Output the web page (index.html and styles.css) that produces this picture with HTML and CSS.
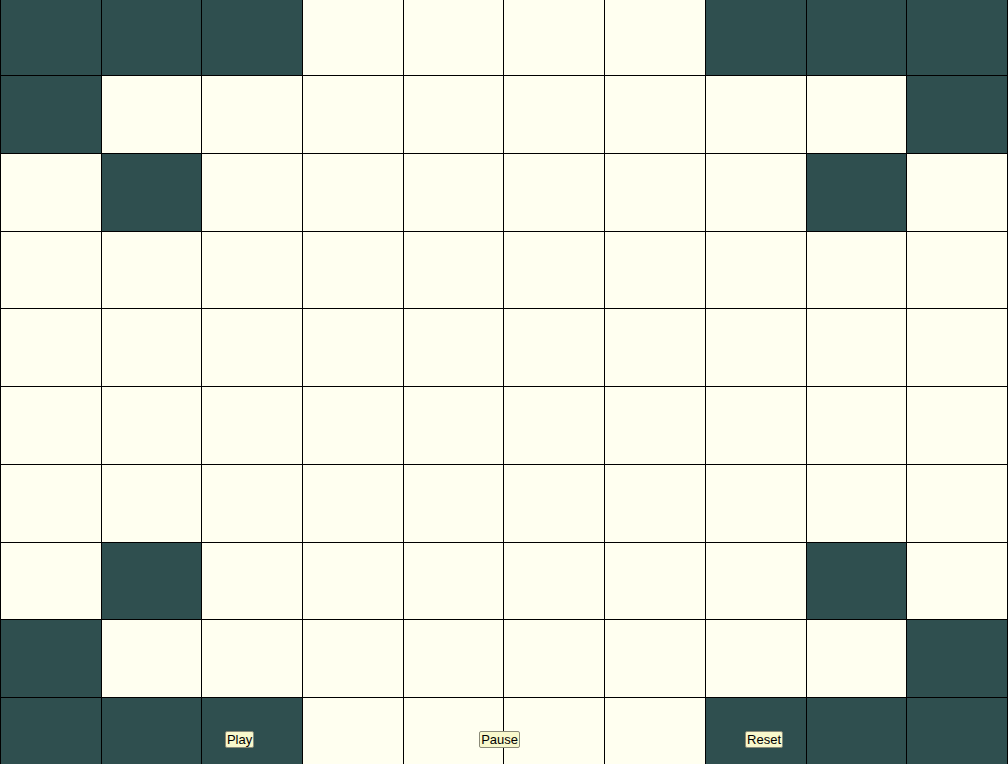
FILE: index.html
```html
<!DOCTYPE html>
<html>
<head>
<meta charset="utf-8">
<link rel="stylesheet" href="styles.css">
</head>
<body>
<div class="board">
  <div class="cell on"></div><div class="cell on"></div><div class="cell on"></div><div class="cell"></div><div class="cell"></div><div class="cell"></div><div class="cell"></div><div class="cell on"></div><div class="cell on"></div><div class="cell on"></div>
  <div class="cell on"></div><div class="cell"></div><div class="cell"></div><div class="cell"></div><div class="cell"></div><div class="cell"></div><div class="cell"></div><div class="cell"></div><div class="cell"></div><div class="cell on"></div>
  <div class="cell"></div><div class="cell on"></div><div class="cell"></div><div class="cell"></div><div class="cell"></div><div class="cell"></div><div class="cell"></div><div class="cell"></div><div class="cell on"></div><div class="cell"></div>
  <div class="cell"></div><div class="cell"></div><div class="cell"></div><div class="cell"></div><div class="cell"></div><div class="cell"></div><div class="cell"></div><div class="cell"></div><div class="cell"></div><div class="cell"></div>
  <div class="cell"></div><div class="cell"></div><div class="cell"></div><div class="cell"></div><div class="cell"></div><div class="cell"></div><div class="cell"></div><div class="cell"></div><div class="cell"></div><div class="cell"></div>
  <div class="cell"></div><div class="cell"></div><div class="cell"></div><div class="cell"></div><div class="cell"></div><div class="cell"></div><div class="cell"></div><div class="cell"></div><div class="cell"></div><div class="cell"></div>
  <div class="cell"></div><div class="cell"></div><div class="cell"></div><div class="cell"></div><div class="cell"></div><div class="cell"></div><div class="cell"></div><div class="cell"></div><div class="cell"></div><div class="cell"></div>
  <div class="cell"></div><div class="cell on"></div><div class="cell"></div><div class="cell"></div><div class="cell"></div><div class="cell"></div><div class="cell"></div><div class="cell"></div><div class="cell on"></div><div class="cell"></div>
  <div class="cell on"></div><div class="cell"></div><div class="cell"></div><div class="cell"></div><div class="cell"></div><div class="cell"></div><div class="cell"></div><div class="cell"></div><div class="cell"></div><div class="cell on"></div>
  <div class="cell on"></div><div class="cell on"></div><div class="cell on"></div><div class="cell"></div><div class="cell"></div><div class="cell"></div><div class="cell"></div><div class="cell on"></div><div class="cell on"></div><div class="cell on"></div>
</div>
<div class="controls">
  <button class="btn">Play</button>
  <button class="btn">Pause</button>
  <button class="btn">Reset</button>
</div>
</body>
</html>
```

FILE: styles.css
```css
html, body {
  margin: 0;
  padding: 0;
  width: 1008px;
  height: 764px;
  overflow: hidden;
  background: #fffff0;
  font-family: "Liberation Sans", Arial, sans-serif;
}

.board {
  display: grid;
  grid-template-columns: repeat(10, 1fr);
  grid-template-rows: repeat(10, 76.75px);
  gap: 1px;
  background: #000;
  border: 1px solid #000;
  margin-top: -2.75px;
  width: 1006px;
}

.cell {
  background: #fffff0;
}

.cell.on {
  background: #2f4f4f;
}

.controls {
  position: absolute;
  left: 0;
  right: 0;
  bottom: 16px;
  display: flex;
  justify-content: space-evenly;
}

.btn {
  font-family: "Liberation Sans", Arial, sans-serif;
  font-size: 13px;
  line-height: 15px;
  padding: 0 1px;
  margin: 0;
  border: 1px solid #8a8a78;
  border-radius: 2px;
  background: #f8f8cc;
  color: #000;
}
```
